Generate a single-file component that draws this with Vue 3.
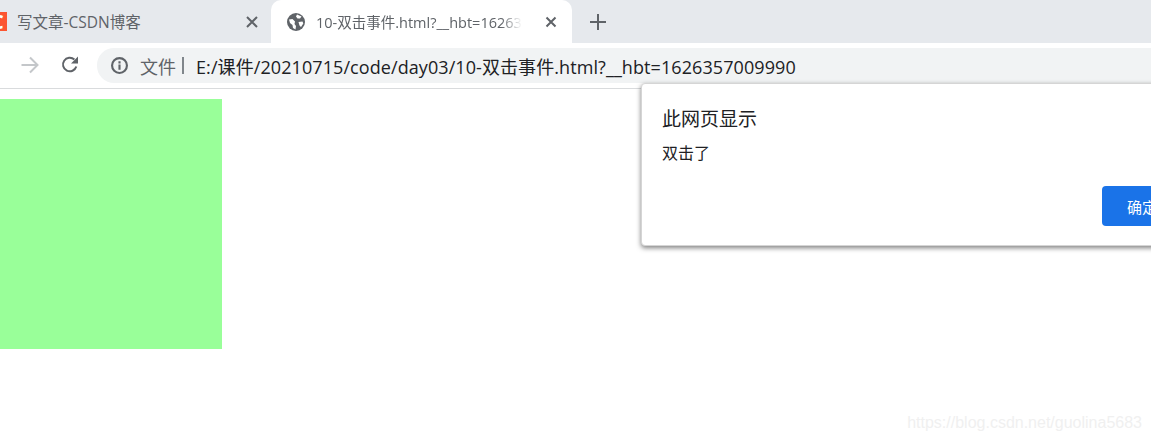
<template>
  <div class="browser">
    <div class="tabstrip">
      <div class="tab tab-inactive">
        <span class="favicon">C</span>
        <span class="tab-title">写文章-CSDN博客</span>
        <svg class="tab-close" viewBox="0 0 12 12" width="12" height="12">
          <path d="M1 1 L11 11 M11 1 L1 11" stroke="#5f6368" stroke-width="2" fill="none" />
        </svg>
      </div>
      <div class="tab tab-active">
        <svg class="globe" viewBox="0 0 18 18" width="18" height="18">
          <circle cx="9" cy="9" r="9" fill="#5f6368" />
          <path d="M2 6.5 L5.5 6 L8 8.5 L7.5 11 L9 13 L8.5 16.5 L6 15 L5.5 12 L3 10 Z M10 1.5 L14.5 3.5 L13 5.5 L10.5 5.5 L9 3.5 Z M11.5 9 L15.5 8.5 L16.3 10.5 L14 14 L12.5 12.5 Z" fill="#fff" />
        </svg>
        <span class="tab-title tab-title-fade">10-双击事件.html?__hbt=1626357009990</span>
        <svg class="tab-close" viewBox="0 0 12 12" width="12" height="12">
          <path d="M1.5 1.5 L10.5 10.5 M10.5 1.5 L1.5 10.5" stroke="#5f6368" stroke-width="2" fill="none" />
        </svg>
      </div>
      <svg class="new-tab" viewBox="0 0 16 16" width="16" height="16">
        <path d="M8 0 V16 M0 8 H16" stroke="#5f6368" stroke-width="2" fill="none" />
      </svg>
    </div>

    <div class="toolbar">
      <svg class="forward" viewBox="0 0 18 18" width="18" height="18">
        <path d="M0.5 9 H16 M9 1.5 L16.5 9 L9 16.5" stroke="#c4c7ca" stroke-width="2" fill="none" />
      </svg>
      <svg class="reload" viewBox="0 0 18 18" width="18" height="18">
        <path d="M15.3 10.5 A6.8 6.8 0 1 1 13.4 3.5" stroke="#5f6368" stroke-width="2" fill="none" />
        <path d="M17 0.5 V7.5 H10 Z" fill="#5f6368" />
      </svg>
      <div class="omnibox">
        <svg class="info" viewBox="0 0 16 16" width="17" height="17">
          <circle cx="8" cy="8" r="7" stroke="#5f6368" stroke-width="2" fill="none" />
          <path d="M8 7 V12 M8 4 V6" stroke="#5f6368" stroke-width="2" fill="none" />
        </svg>
        <span class="scheme">文件</span>
        <span class="divider"></span>
        <span class="url">E:/课件/20210715/code/day03/10-双击事件.html?__hbt=1626357009990</span>
      </div>
    </div>

    <div class="page">
      <div class="box"></div>
      <div class="watermark">https://blog.csdn.net/guolina5683</div>
      <div class="dialog">
        <div class="dialog-title">此网页显示</div>
        <div class="dialog-msg">双击了</div>
        <div class="dialog-actions">
          <button class="ok">确定</button>
        </div>
      </div>
    </div>
  </div>
</template>

<script setup>
</script>

<style>
html,
body {
  margin: 0;
  background: #fff;
  overflow: hidden;
}
</style>

<style scoped>
.browser {
  width: 1151px;
  height: 442px;
  overflow: hidden;
  display: flex;
  flex-direction: column;
  font-family: "Open Sans", "Noto Sans CJK SC", sans-serif;
}

.tabstrip {
  height: 43px;
  background: #e6e9ed;
  display: flex;
  align-items: flex-start;
  flex-shrink: 0;
}

.tab {
  height: 43px;
  display: flex;
  align-items: center;
  font-size: 14.5px;
  color: #5f6368;
  box-sizing: border-box;
}

.tab-inactive {
  width: 271px;
  font-size: 15.5px;
}

.favicon {
  width: 7px;
  height: 19px;
  margin-right: 10px;
  background: #fc5531;
  color: #fff;
  font-size: 20px;
  font-weight: 700;
  line-height: 19px;
  text-indent: -9px;
  overflow: hidden;
  flex-shrink: 0;
}

.tab-title {
  white-space: nowrap;
  overflow: hidden;
  flex: 1;
}

.tab-inactive .tab-close {
  margin-right: 13px;
}

.tab-active {
  width: 301px;
  background: #fff;
  border-radius: 10px 10px 0 0;
  padding-left: 16px;
}

.globe {
  margin-right: 11px;
  flex-shrink: 0;
}

.tab-title-fade {
  -webkit-mask-image: linear-gradient(to right, #000 185px, transparent 206px);
  mask-image: linear-gradient(to right, #000 185px, transparent 206px);
}

.tab-active .tab-close {
  margin: 0 15px 0 10px;
  flex-shrink: 0;
}

.new-tab {
  margin: 14px 0 0 18px;
}

.toolbar {
  height: 46px;
  box-sizing: border-box;
  border-bottom: 1px solid #d9dbdd;
  background: #fff;
  display: flex;
  align-items: flex-start;
  flex-shrink: 0;
  padding-top: 5px;
}

.forward {
  margin: 8px 0 0 21px;
}

.reload {
  margin: 8px 0 0 22px;
}

.omnibox {
  margin-left: 18px;
  flex: 1;
  height: 35px;
  background: #f1f3f4;
  border-radius: 17px 0 0 17px;
  display: flex;
  align-items: center;
  padding-left: 14px;
  white-space: nowrap;
}

.scheme {
  margin-left: 12px;
  font-size: 18px;
  color: #5f6368;
}

.divider {
  width: 2px;
  height: 17px;
  background: #80868b;
  margin: 0 12px 0 6px;
}

.url {
  font-size: 18px;
  letter-spacing: 0.08px;
  color: #202124;
}

.page {
  flex: 1;
  position: relative;
  padding-top: 10px;
}

.box {
  width: 222px;
  height: 250px;
  background: #9f9;
}

.watermark {
  position: absolute;
  right: 9px;
  bottom: 10px;
  font-family: "Liberation Sans", sans-serif;
  font-size: 16px;
  color: #f0f0f0;
}

.dialog {
  position: absolute;
  left: 641px;
  top: -6px;
  width: 560px;
  height: 163px;
  box-sizing: border-box;
  background: #fff;
  border-radius: 4px;
  border: 1px solid #d5d5d5;
  box-shadow: 0 2px 5px rgba(0, 0, 0, 0.5);
  padding: 23px 20px 0;
}

.dialog-title {
  font-size: 19px;
  line-height: 24px;
  color: #202124;
}

.dialog-msg {
  font-size: 16px;
  line-height: 20px;
  margin-top: 12px;
  color: #202124;
}

.dialog-actions {
  margin-top: 23px;
  padding-left: 440px;
}

.ok {
  width: 80px;
  height: 40px;
  background: #1a73e8;
  color: #fff;
  border: none;
  border-radius: 4px;
  font-family: inherit;
  font-size: 15px;
  padding: 0 0 0 25px;
  text-align: left;
  white-space: nowrap;
}
</style>
